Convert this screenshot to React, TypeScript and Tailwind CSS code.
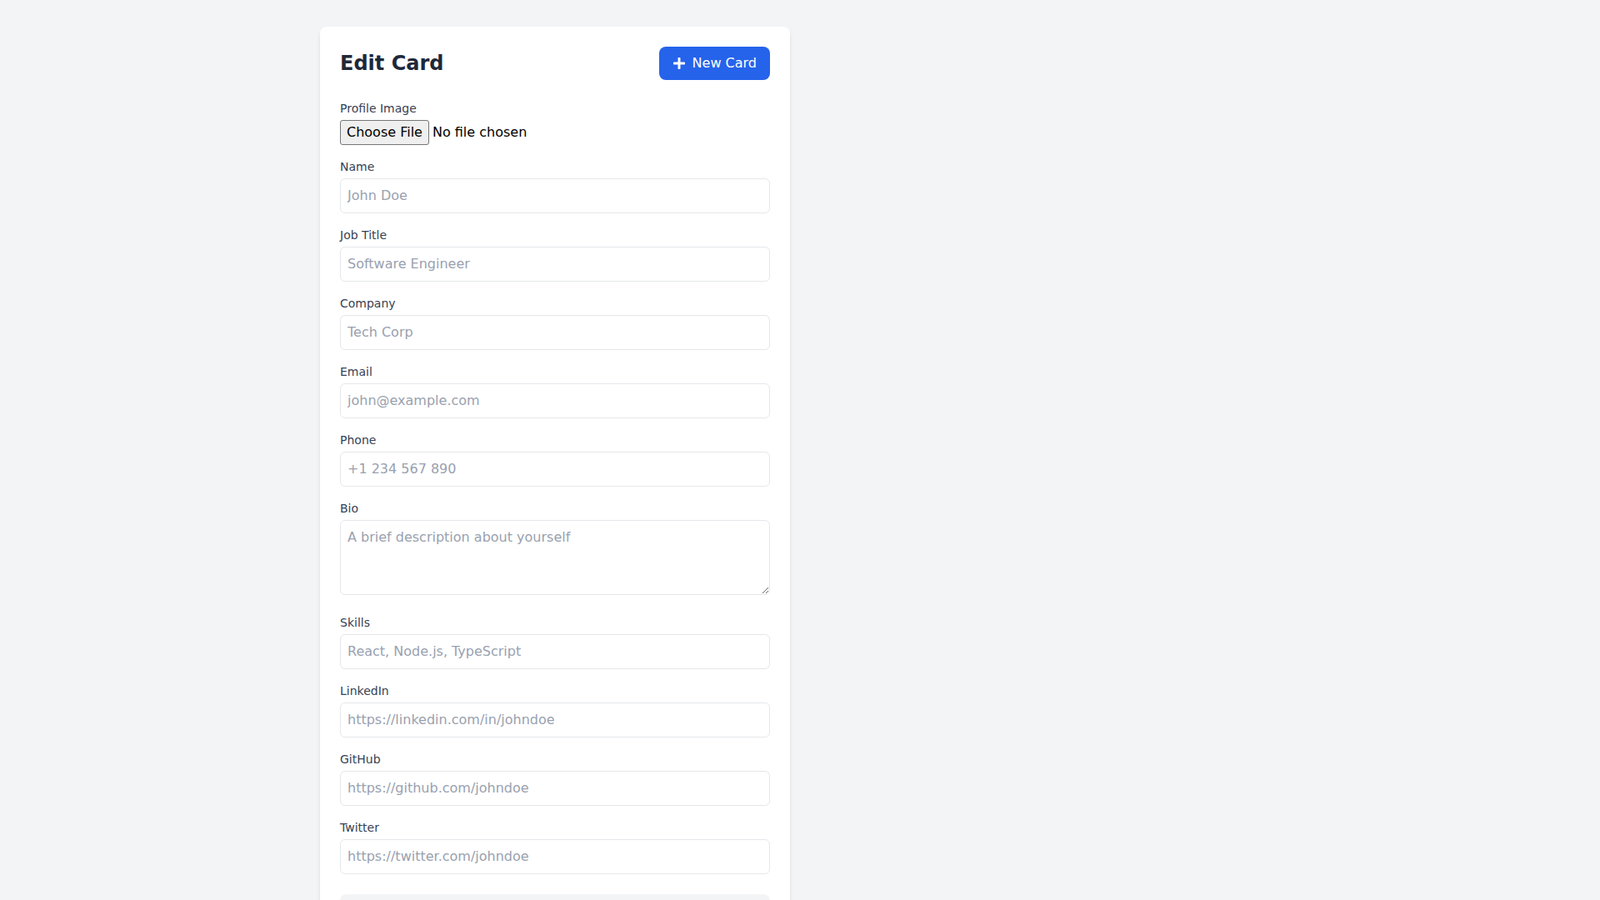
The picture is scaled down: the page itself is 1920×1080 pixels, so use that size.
import React from 'react';
import { FaPlus } from 'react-icons/fa';

const fields = [
  { label: 'Name', placeholder: 'John Doe' },
  { label: 'Job Title', placeholder: 'Software Engineer' },
  { label: 'Company', placeholder: 'Tech Corp' },
  { label: 'Email', placeholder: 'john@example.com' },
  { label: 'Phone', placeholder: '+1 234 567 890' },
];

const links = [
  { label: 'Skills', placeholder: 'React, Node.js, TypeScript' },
  { label: 'LinkedIn', placeholder: 'https://linkedin.com/in/johndoe' },
  { label: 'GitHub', placeholder: 'https://github.com/johndoe' },
  { label: 'Twitter', placeholder: 'https://twitter.com/johndoe' },
];

const Field = ({ label, placeholder }: { label: string; placeholder: string }) => (
  <div>
    <label className="block text-sm text-gray-700 mb-1">{label}</label>
    <input
      type="text"
      placeholder={placeholder}
      className="w-full px-2 py-2 border border-gray-200 rounded-md text-base placeholder:text-gray-400 outline-none"
    />
  </div>
);

export default function App() {
  return (
    <div className="min-h-screen bg-gray-100 font-['DejaVu_Sans',sans-serif]">
      <div className="max-w-6xl mx-auto py-8 grid grid-cols-2 gap-6">
        <div className="bg-white rounded-lg shadow-md p-6">
          <div className="flex items-center justify-between mb-6">
            <h2 className="text-2xl font-bold text-gray-800">Edit Card</h2>
            <button className="flex items-center gap-2 bg-[#2563eb] text-white px-4 py-2 rounded-lg text-base">
              <FaPlus className="w-4 h-4" />
              New Card
            </button>
          </div>

          <div className="space-y-4">
            <div>
              <label className="block text-sm text-gray-700 mb-1">Profile Image</label>
              <input
                type="file"
                className="block text-base text-black file:mr-1 file:px-[7px] file:py-0.5 file:border file:border-solid file:border-[#767676] file:bg-[#efefef] file:rounded-[3px] file:text-black"
              />
            </div>

            {fields.map((f) => (
              <Field key={f.label} {...f} />
            ))}

            <div>
              <label className="block text-sm text-gray-700 mb-1">Bio</label>
              <textarea
                rows={3}
                placeholder="A brief description about yourself"
                className="w-full px-2 py-2 border border-gray-200 rounded-md text-base placeholder:text-gray-400 outline-none"
              />
            </div>

            {links.map((f) => (
              <Field key={f.label} {...f} />
            ))}
          </div>

          <button className="mt-6 w-full py-3 bg-gray-100 text-gray-700 rounded-lg text-base">
            Download Card
          </button>
        </div>
        <div></div>
      </div>
    </div>
  );
}
